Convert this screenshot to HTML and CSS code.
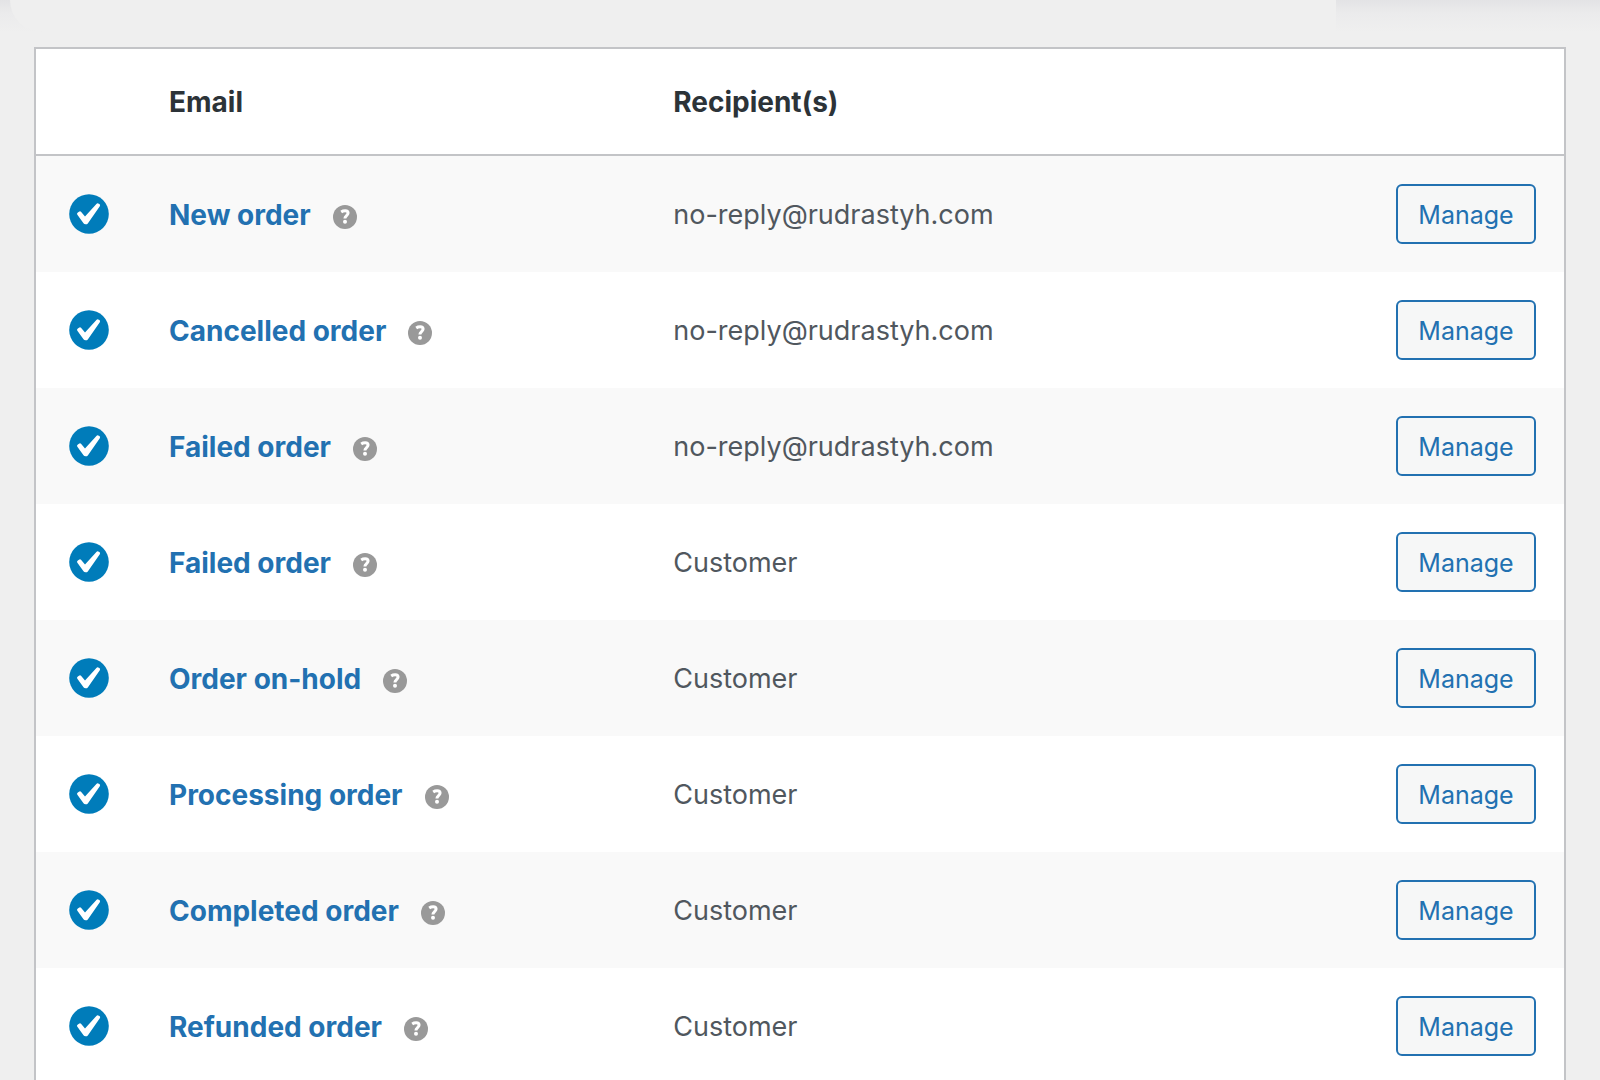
FILE: index.html
```html
<!DOCTYPE html>
<html lang="en">
<head>
<meta charset="utf-8">
<meta name="viewport" content="width=device-width, initial-scale=1">
<title>Email notifications</title>
<link rel="stylesheet" href="styles.css">
</head>
<body>
<svg class="symbols" aria-hidden="true">
  <symbol id="check" viewBox="0 0 40 40">
    <circle cx="20" cy="20" r="19.8" fill="#007cba"/>
    <path d="M9.2 18.2 10.4 17.4Q11.4 17 12 17.7L16 22.6 27.4 9.9Q28.4 8.9 29.8 9.7L30.4 10.1Q31.6 10.9 30.8 12.2L18.8 29.4Q18 30.4 16.6 30.3 15.2 30.3 14.5 29.2L8.2 20.4Q7.5 19 9.2 18.2Z" fill="#fff"/>
  </symbol>
  <symbol id="help" viewBox="0 0 24 24">
    <circle cx="12" cy="12" r="12" fill="#999"/>
    <path d="M8.2 7C9.5 6.1 10.8 5.8 12.2 5.8c2 0 2.9.9 2.9 2.3 0 2.5-3.2 2.5-3.2 5.3" fill="none" stroke="#fff" stroke-width="3"/>
    <circle cx="12" cy="16.8" r="2" fill="#fff"/>
  </symbol>
</svg>
<div class="panel-edge" aria-hidden="true"><div class="panel-left"></div><div class="panel-right"></div></div>
<main class="content">
<table class="emails">
  <thead>
    <tr><th class="status"></th><th class="name" scope="col">Email</th><th scope="col">Recipient(s)</th><th class="action"></th></tr>
  </thead>
  <tbody>
    <tr><td class="status"><svg class="check" role="img" aria-label="Enabled"><use href="#check"/></svg></td><td class="name"><div class="title"><a href="#">New order</a><svg class="help" role="img" aria-label="Help"><use href="#help"/></svg></div></td><td class="recipient">no-reply@rudrastyh.com</td><td class="action"><button type="button">Manage</button></td></tr>
    <tr><td class="status"><svg class="check" role="img" aria-label="Enabled"><use href="#check"/></svg></td><td class="name"><div class="title"><a href="#">Cancelled order</a><svg class="help" role="img" aria-label="Help"><use href="#help"/></svg></div></td><td class="recipient">no-reply@rudrastyh.com</td><td class="action"><button type="button">Manage</button></td></tr>
    <tr><td class="status"><svg class="check" role="img" aria-label="Enabled"><use href="#check"/></svg></td><td class="name"><div class="title"><a href="#">Failed order</a><svg class="help" role="img" aria-label="Help"><use href="#help"/></svg></div></td><td class="recipient">no-reply@rudrastyh.com</td><td class="action"><button type="button">Manage</button></td></tr>
    <tr><td class="status"><svg class="check" role="img" aria-label="Enabled"><use href="#check"/></svg></td><td class="name"><div class="title"><a href="#">Failed order</a><svg class="help" role="img" aria-label="Help"><use href="#help"/></svg></div></td><td class="recipient">Customer</td><td class="action"><button type="button">Manage</button></td></tr>
    <tr><td class="status"><svg class="check" role="img" aria-label="Enabled"><use href="#check"/></svg></td><td class="name"><div class="title"><a href="#">Order on-hold</a><svg class="help" role="img" aria-label="Help"><use href="#help"/></svg></div></td><td class="recipient">Customer</td><td class="action"><button type="button">Manage</button></td></tr>
    <tr><td class="status"><svg class="check" role="img" aria-label="Enabled"><use href="#check"/></svg></td><td class="name"><div class="title"><a href="#">Processing order</a><svg class="help" role="img" aria-label="Help"><use href="#help"/></svg></div></td><td class="recipient">Customer</td><td class="action"><button type="button">Manage</button></td></tr>
    <tr><td class="status"><svg class="check" role="img" aria-label="Enabled"><use href="#check"/></svg></td><td class="name"><div class="title"><a href="#">Completed order</a><svg class="help" role="img" aria-label="Help"><use href="#help"/></svg></div></td><td class="recipient">Customer</td><td class="action"><button type="button">Manage</button></td></tr>
    <tr><td class="status"><svg class="check" role="img" aria-label="Enabled"><use href="#check"/></svg></td><td class="name"><div class="title"><a href="#">Refunded order</a><svg class="help" role="img" aria-label="Help"><use href="#help"/></svg></div></td><td class="recipient">Customer</td><td class="action"><button type="button">Manage</button></td></tr>
  </tbody>
</table>
</main>
</body>
</html>
```
FILE: styles.css
```css
* { box-sizing: border-box; }

html { scrollbar-width: none; }

body {
  margin: 0;
  background: #efefef;
  color: #50575e;
  font: 28px/40px Inter, "Liberation Sans", sans-serif;
}

.symbols { display: none; }

/* Lower edge of the toolbar above the table */
.panel-edge {
  display: flex;
  height: 32px;
  background: linear-gradient(#e3e3e5, #ebebec 40%, #efefef);
}

.panel-left {
  flex: 1;
  margin-left: 10px;
  background: #efefef;
  border-bottom-left-radius: 32px;
}

.panel-right { width: 264px; }

.content { padding: 15px 34px 0; }

.emails {
  width: 100%;
  table-layout: fixed;
  border-collapse: separate;
  border-spacing: 0;
  border: 2px solid #c3c4c7;
  background: #fff;
}

th, td {
  padding: 28px 0;
  text-align: left;
  vertical-align: middle;
}

th {
  height: 107px;
  border-bottom: 2px solid #c3c4c7;
  color: #2c3338;
  font-weight: 700;
}

td { height: 116px; }

tbody tr:nth-child(odd) { background: #f9f9f9; }

.status { width: 133px; }
td.status { padding-left: 33px; }
.name { width: 33%; }
td.name, td.recipient { padding: 30px 0 28px; }
td.recipient { font-size: 27px; }
.action { width: 240px; }
td.action { padding-right: 28px; text-align: right; }

.check {
  display: block;
  width: 40px;
  height: 40px;
}

.title {
  display: flex;
  align-items: center;
  gap: 22px;
}

.title a {
  color: #2271b1;
  font-weight: 700;
  text-decoration: none;
}

.help {
  width: 24px;
  height: 24px;
  margin-top: 4px;
}

button {
  display: block;
  width: 140px;
  height: 60px;
  margin-left: auto;
  padding: 2px 0 0;
  border: 2px solid #2271b1;
  border-radius: 6px;
  background: #f6f7f7;
  color: #2271b1;
  font: 25px/36px Inter, "Liberation Sans", sans-serif;
}
```
